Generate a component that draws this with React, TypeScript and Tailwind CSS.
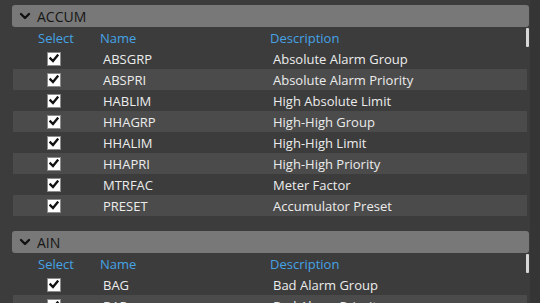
import { ChevronDown } from 'lucide-react';

type Item = { name: string; description: string; checked: boolean };
type Group = { title: string; items: Item[] };

const groups: Group[] = [
  {
    title: 'ACCUM',
    items: [
      { name: 'ABSGRP', description: 'Absolute Alarm Group', checked: true },
      { name: 'ABSPRI', description: 'Absolute Alarm Priority', checked: true },
      { name: 'HABLIM', description: 'High Absolute Limit', checked: true },
      { name: 'HHAGRP', description: 'High-High Group', checked: true },
      { name: 'HHALIM', description: 'High-High Limit', checked: true },
      { name: 'HHAPRI', description: 'High-High Priority', checked: true },
      { name: 'MTRFAC', description: 'Meter Factor', checked: true },
      { name: 'PRESET', description: 'Accumulator Preset', checked: true },
    ],
  },
  {
    title: 'AIN',
    items: [
      { name: 'BAG', description: 'Bad Alarm Group', checked: true },
      { name: 'BAP', description: 'Bad Alarm Priority', checked: true },
      { name: 'BAT', description: 'Bad Alarm Text', checked: true },
    ],
  },
];

function CheckBox({ checked }: { checked: boolean }) {
  return (
    <div className="w-[14px] h-[14px] bg-white border border-[#8c8c8c] flex items-center justify-center">
      {checked && (
        <svg width="10" height="9" viewBox="0 0 10 9">
          <path d="M1.5 4.5 L4 7 L8.5 1.5" fill="none" stroke="#111" strokeWidth="2.4" strokeLinecap="square" />
        </svg>
      )}
    </div>
  );
}

function GroupPanel({ group }: { group: Group }) {
  return (
    <div className="flex flex-col">
      <div className="h-[22px] bg-[#787878] rounded-[3px] flex items-center gap-[4px] pl-[5px] text-[#161616] text-[14px]">
        <ChevronDown size={16} strokeWidth={3.5} color="#111" />
        <span className="pt-[1px]">{group.title}</span>
      </div>
      <div className="relative pl-[1px] pr-[2px]">
        <div className="absolute right-[0px] top-[1px] w-[3px] h-[19px] bg-[#d8d8d8] rounded-[1px]" />
        <div className="grid grid-cols-[87px_170px_1fr] h-[21px] items-center text-[#45a3e6] text-[13px] pt-[2px]">
          <span className="pl-[25px]">Select</span>
          <span>Name</span>
          <span>Description</span>
        </div>
        {group.items.map((item, i) => (
          <div
            key={item.name}
            className={`grid grid-cols-[87px_170px_1fr] h-[21px] items-center text-[#ececec] text-[13px] ${i % 2 === 1 ? 'bg-[#4b4b4b]' : 'bg-[#3c3c3c]'}`}
          >
            <div className="pl-[34px]">
              <CheckBox checked={item.checked} />
            </div>
            <span className="pl-[3px] pt-[2px]">{item.name}</span>
            <span className="pl-[3px] pt-[2px]">{item.description}</span>
          </div>
        ))}
      </div>
    </div>
  );
}

export default function App() {
  return (
    <div
      className="w-[540px] h-[303px] overflow-hidden bg-[#3c3c3c] flex"
      style={{ fontFamily: '"Open Sans", "Noto Sans", sans-serif' }}
    >
      <div className="flex-1 pl-[12px] pr-[1px] pt-[5px] flex flex-col gap-[15px]">
        {groups.map(g => (
          <GroupPanel key={g.title} group={g} />
        ))}
      </div>
      <div className="w-[10px] bg-[#353535]" />
    </div>
  );
}
